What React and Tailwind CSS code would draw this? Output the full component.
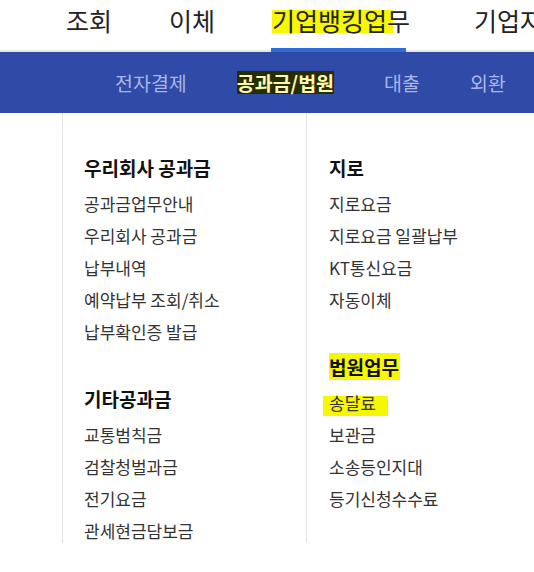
import React from 'react'

const topMenu = ['조회', '이체', '기업뱅킹업무', '기업자금관리']
const subMenu = ['전자결제', '공과금/법원', '대출', '외환']

const leftGroups = [
  {
    title: '우리회사 공과금',
    items: ['공과금업무안내', '우리회사 공과금', '납부내역', '예약납부 조회/취소', '납부확인증 발급'],
  },
  {
    title: '기타공과금',
    items: ['교통범칙금', '검찰청벌과금', '전기요금', '관세현금담보금'],
  },
]

const rightGroups = [
  {
    title: '지로',
    items: ['지로요금', '지로요금 일괄납부', 'KT통신요금', '자동이체'],
  },
  {
    title: '법원업무',
    mark: true,
    items: ['송달료', '보관금', '소송등인지대', '등기신청수수료'],
  },
]

const Group = ({ group, first }) => (
  <div className={first ? '' : 'mt-[39px]'}>
    <h3 className="text-[19px] leading-[24px] font-bold text-[#111] mb-[8px]">
      {group.mark ? <span className="bg-[#f7f700] pr-[1px]">{group.title}</span> : group.title}
    </h3>
    <ul>
      {group.items.map((item) => (
        <li key={item} className="text-[17px] leading-[32px] text-[#333] whitespace-nowrap">
          {item === '송달료' ? (
            <span className="relative inline-block">
              <span className="absolute left-[-6px] top-[9px] w-[65px] h-[20px] bg-[#f7f700]" />
              <span className="relative">{item}</span>
            </span>
          ) : (
            item
          )}
        </li>
      ))}
    </ul>
  </div>
)

const App = () => {
  return (
    <div className="w-[534px] h-[572px] overflow-hidden bg-white font-['Noto_Sans_CJK_KR','Noto_Sans',sans-serif]">
      <nav className="h-[52px] border-b-2 border-[#e6e6e6] flex items-start pl-[66px] whitespace-nowrap">
        {topMenu.map((m, i) => (
          <div
            key={m}
            className={
              'relative h-[50px] pt-[4px] text-[25px] leading-[32px] text-[#222] ' +
              (i === 0 ? '' : i === 3 ? 'ml-[64px]' : 'ml-[57px]')
            }
          >
            {m === '기업뱅킹업무' && (
              <>
                <span className="absolute left-[0px] top-[10px] w-[121px] h-[23px] bg-[#f7f700]" />
                <span className="absolute left-[-1px] bottom-[-2px] w-[135px] h-[4px] bg-[#2e6cd9]" />
              </>
            )}
            <span className="relative">{m}</span>
          </div>
        ))}
      </nav>

      <div className="h-[61px] bg-[#2f4aa7] flex items-center pl-[115px] gap-[50px] whitespace-nowrap">
        {subMenu.map((m) =>
          m === '공과금/법원' ? (
            <span key={m} className="text-[19.5px] leading-[23px] font-bold text-[#fbfbb0] bg-[#262d02]">
              {m}
            </span>
          ) : (
            <span key={m} className="text-[19.5px] leading-[23px] text-[#a9b6e6]">
              {m}
            </span>
          )
        )}
      </div>

      <div className="ml-[62px] h-[430px] flex overflow-hidden">
        <div className="w-[244px] shrink-0 border-l border-[#e4e4e4] pl-[21px] pt-[43px]">
          {leftGroups.map((g, i) => (
            <Group key={g.title} group={g} first={i === 0} />
          ))}
        </div>
        <div className="flex-1 border-l border-[#e4e4e4] pl-[22px] pt-[43px]">
          {rightGroups.map((g, i) => (
            <Group key={g.title} group={g} first={i === 0} />
          ))}
        </div>
      </div>
    </div>
  )
}

export default App
